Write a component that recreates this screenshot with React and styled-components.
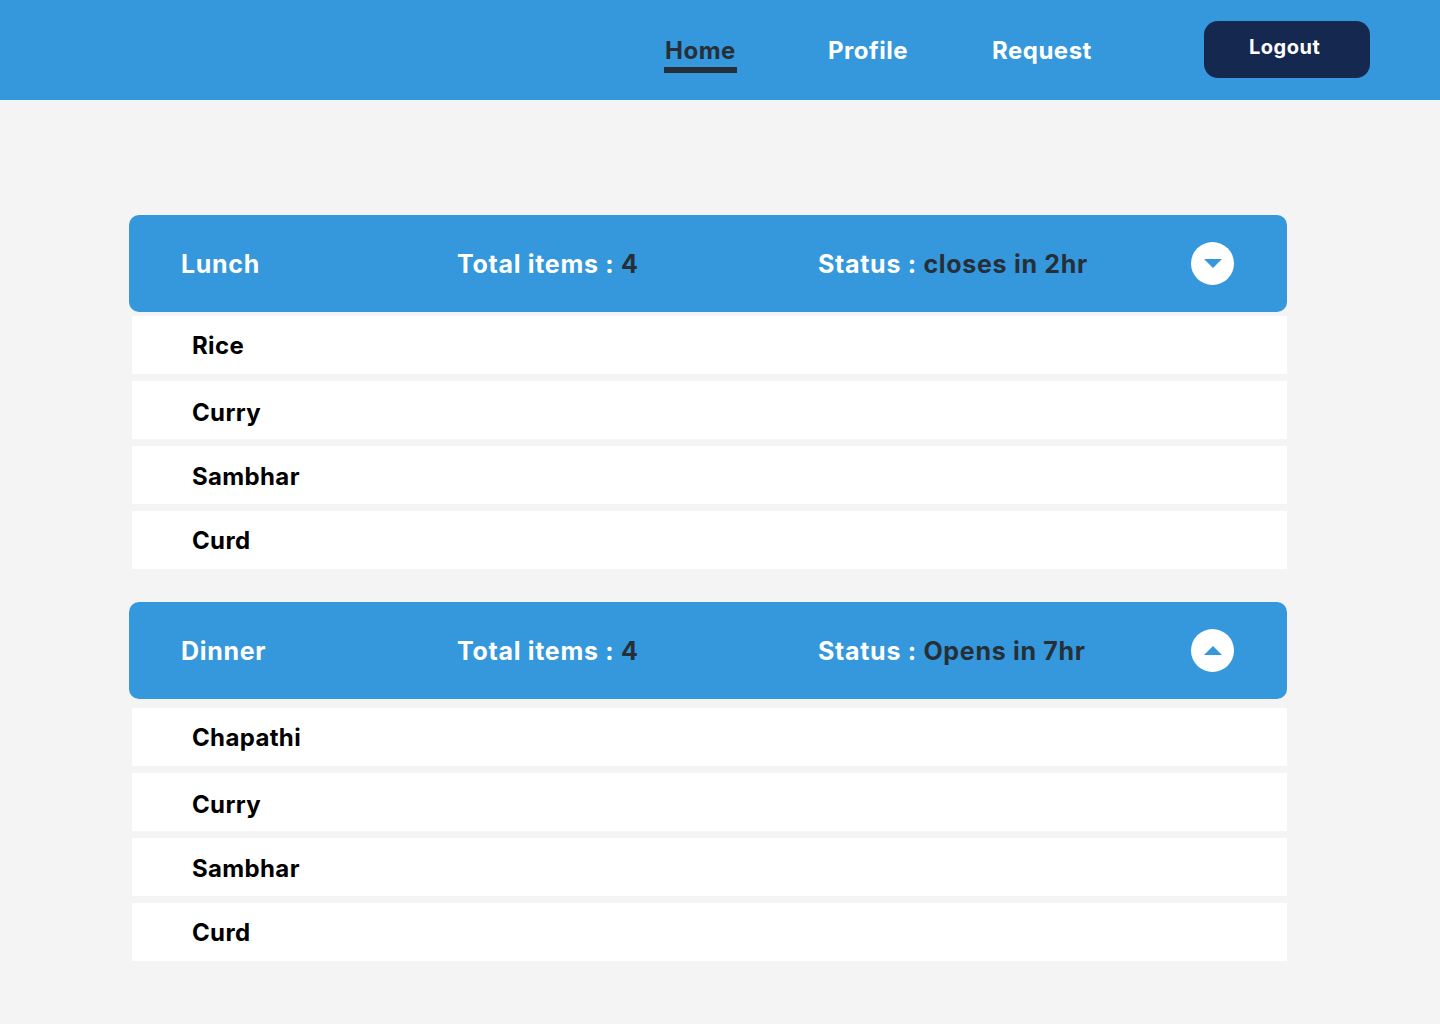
import React from "react";
import styled, { createGlobalStyle } from "styled-components";

const Global = createGlobalStyle`
  html, body { margin: 0; padding: 0; background: #f4f4f4; }
  body { font-family: "Inter", "Noto Sans", sans-serif; }
  * { box-sizing: border-box; }
`;
const Page = styled.div`
  width: 1440px;
  min-height: 1024px;
  background: #f4f4f4;
`;
const TopBar = styled.header`
  height: 100px;
  background: #3598dc;
  display: flex;
  align-items: flex-start;
  padding: 21px 70px 0 664px;
`;
const Nav = styled.nav`
  display: grid;
  grid-template-columns: 163px 164px 213px;
`;
const NavLink = styled.a`
  justify-self: start;
  height: 52px;
  padding: 13px 1px 0;
  font-size: 24px;
  line-height: 33px;
  font-weight: 700;
  letter-spacing: 0.5px;
  color: ${(p) => (p.$active ? "#262f38" : "#fff")};
  border-bottom: ${(p) => (p.$active ? "6px solid #262f38" : "none")};
`;
const LogoutButton = styled.button`
  width: 166px;
  height: 57px;
  border: 0;
  border-radius: 14px;
  background: #152850;
  color: #fff;
  font-family: inherit;
  font-size: 20px;
  font-weight: 700;
  letter-spacing: 0.5px;
  text-align: left;
  padding: 0 0 6px 45px;
`;
const Main = styled.main`
  padding: 115px 153px 0 129px;
`;
const Section = styled.section`
  margin-bottom: 33px;
`;
const SectionHeader = styled.div`
  height: 97px;
  border-radius: 10px;
  background: #3598dc;
  display: grid;
  grid-template-columns: 276px 361px 1fr 43px;
  align-items: center;
  padding: 0 53px 0 52px;
  color: #fff;
  font-size: 25px;
  font-weight: 700;
  letter-spacing: 0.7px;
`;
const Dark = styled.span`
  color: #262f38;
`;
const Toggle = styled.span`
  width: 43px;
  height: 43px;
  border-radius: 50%;
  background: #fff;
  display: flex;
  align-items: center;
  justify-content: center;
`;
const Rows = styled.div`
  margin-top: ${(p) => p.$top}px;
  padding-left: 3px;
  display: flex;
  flex-direction: column;
  gap: 7px;
`;
const Row = styled.div`
  height: 58px;
  background: #fff;
  padding: ${(p) => p.$nudge * 2}px 0 0 60px;
  display: flex;
  align-items: center;
  font-size: 24px;
  font-weight: 700;
  letter-spacing: 0.35px;
  color: #000;
`;
const Arrow = ({ up }) => (
  <svg width="18" height="9" viewBox="0 0 18 9">
    <path d={up ? "M0 9 L9 0 L18 9 Z" : "M0 0 L18 0 L9 9 Z"} fill="#3598dc" />
  </svg>
);
const nudges = [0, 2, 1, 0];
const menus = [
  { name: "Lunch", status: "closes in 2hr", up: false, top: 4, items: ["Rice", "Curry", "Sambhar", "Curd"] },
  { name: "Dinner", status: "Opens in 7hr", up: true, top: 9, items: ["Chapathi", "Curry", "Sambhar", "Curd"] },
];
export default function App() {
  return (
    <Page>
      <Global />
      <TopBar>
        <Nav>
          <NavLink $active>Home</NavLink>
          <NavLink>Profile</NavLink>
          <NavLink>Request</NavLink>
        </Nav>
        <LogoutButton>Logout</LogoutButton>
      </TopBar>
      <Main>
        {menus.map((m) => (
          <Section key={m.name}>
            <SectionHeader>
              <span>{m.name}</span>
              <span>Total items : <Dark>4</Dark></span>
              <span>Status : <Dark>{m.status}</Dark></span>
              <Toggle><Arrow up={m.up} /></Toggle>
            </SectionHeader>
            <Rows $top={m.top}>
              {m.items.map((item, i) => <Row key={item} $nudge={nudges[i]}>{item}</Row>)}
            </Rows>
          </Section>
        ))}
      </Main>
    </Page>
  );
}
